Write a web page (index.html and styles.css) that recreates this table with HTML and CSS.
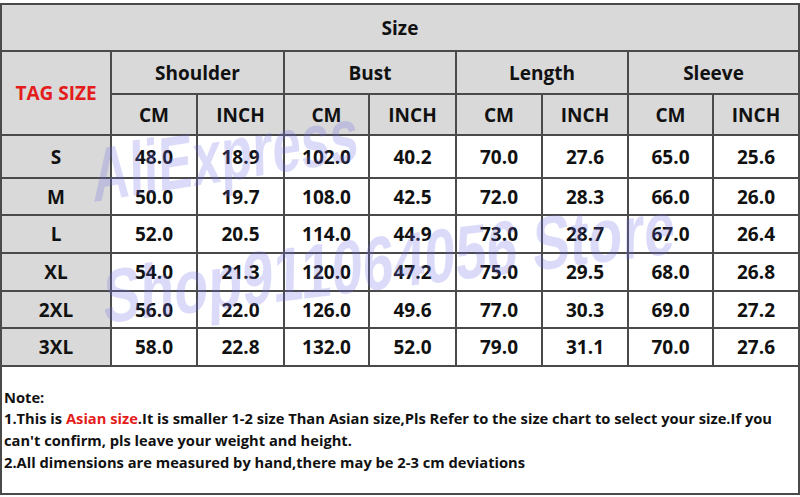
FILE: index.html
```html
<!DOCTYPE html>
<html>
<head>
<meta charset="utf-8">
<link rel="stylesheet" href="styles.css">
</head>
<body>
<div class="sheet">
  <div class="grid">
    <div class="cell hd title">Size</div>
    <div class="cell hd tag">TAG SIZE</div>
    <div class="cell hd grp">Shoulder</div>
    <div class="cell hd grp">Bust</div>
    <div class="cell hd grp">Length</div>
    <div class="cell hd grp">Sleeve</div>
    <div class="cell hd">CM</div><div class="cell hd">INCH</div>
    <div class="cell hd">CM</div><div class="cell hd">INCH</div>
    <div class="cell hd">CM</div><div class="cell hd">INCH</div>
    <div class="cell hd">CM</div><div class="cell hd">INCH</div>

    <div class="cell hd">S</div><div class="cell">48.0</div><div class="cell">18.9</div><div class="cell">102.0</div><div class="cell">40.2</div><div class="cell">70.0</div><div class="cell">27.6</div><div class="cell">65.0</div><div class="cell">25.6</div>
    <div class="cell hd">M</div><div class="cell">50.0</div><div class="cell">19.7</div><div class="cell">108.0</div><div class="cell">42.5</div><div class="cell">72.0</div><div class="cell">28.3</div><div class="cell">66.0</div><div class="cell">26.0</div>
    <div class="cell hd">L</div><div class="cell">52.0</div><div class="cell">20.5</div><div class="cell">114.0</div><div class="cell">44.9</div><div class="cell">73.0</div><div class="cell">28.7</div><div class="cell">67.0</div><div class="cell">26.4</div>
    <div class="cell hd">XL</div><div class="cell">54.0</div><div class="cell">21.3</div><div class="cell">120.0</div><div class="cell">47.2</div><div class="cell">75.0</div><div class="cell">29.5</div><div class="cell">68.0</div><div class="cell">26.8</div>
    <div class="cell hd">2XL</div><div class="cell">56.0</div><div class="cell">22.0</div><div class="cell">126.0</div><div class="cell">49.6</div><div class="cell">77.0</div><div class="cell">30.3</div><div class="cell">69.0</div><div class="cell">27.2</div>
    <div class="cell hd">3XL</div><div class="cell">58.0</div><div class="cell">22.8</div><div class="cell">132.0</div><div class="cell">52.0</div><div class="cell">79.0</div><div class="cell">31.1</div><div class="cell">70.0</div><div class="cell">27.6</div>

    <div class="cell note">
      <p>Note:<br>1.This is <span class="red">Asian size</span>.It is smaller 1-2 size Than Asian size,Pls Refer to the size chart to select your size.If you can't confirm, pls leave your weight and height.<br>2.All dimensions are measured by hand,there may be 2-3 cm deviations</p>
    </div>
  </div>
  <div class="wm wm1">AliExpress</div>
  <div class="wm wm2">Shop911064056 Store</div>
</div>
</body>
</html>
```

FILE: styles.css
```css
html, body {
  margin: 0;
  background: #fff;
}
body {
  font-family: "Open Sans", "Noto Sans", sans-serif;
  font-weight: 700;
  color: #111;
}
.sheet {
  position: relative;
  width: 800px;
  height: 497px;
  padding-top: 3px;
  box-sizing: border-box;
  overflow: hidden;
}
.grid {
  display: grid;
  width: 800px;
  box-sizing: border-box;
  grid-template-columns: 108px 84px 85px 83px 85px 84px 84px 83px 84px;
  grid-template-rows: 45px 41px 39px 41px 35px 36px 36px 35px 36px 126px;
  gap: 2px;
  padding: 2px;
  background: #4a4a4a;
}
.cell {
  background: #fff;
  display: flex;
  align-items: center;
  justify-content: center;
  font-size: 19px;
}
.hd {
  background: #d9d9d9;
}
.title {
  grid-column: 1 / -1;
}
.tag {
  grid-row: span 2;
  color: #e31c1c;
}
.grp {
  grid-column: span 2;
}
.note {
  grid-column: 1 / -1;
  justify-content: flex-start;
  padding: 0 8px 0 2px;
  font-size: 14.7px;
}
.note p {
  margin: 0;
  line-height: 21.7px;
}
.red {
  color: #e31c1c;
}
.wm {
  position: absolute;
  font-family: "Liberation Sans", Arial, sans-serif;
  font-weight: 700;
  line-height: 1;
  white-space: nowrap;
  color: rgba(110, 110, 230, 0.25);
  pointer-events: none;
}
.wm1 {
  left: 93px;
  top: 158px;
  font-size: 52px;
  transform-origin: 0 44px;
  transform: rotate(-9deg) skewX(-8deg) scaleY(1.45);
}
.wm2 {
  left: 103px;
  top: 276px;
  font-size: 56px;
  transform-origin: 0 46px;
  transform: rotate(-7deg) skewX(-8deg) scaleY(1.35);
}
```
